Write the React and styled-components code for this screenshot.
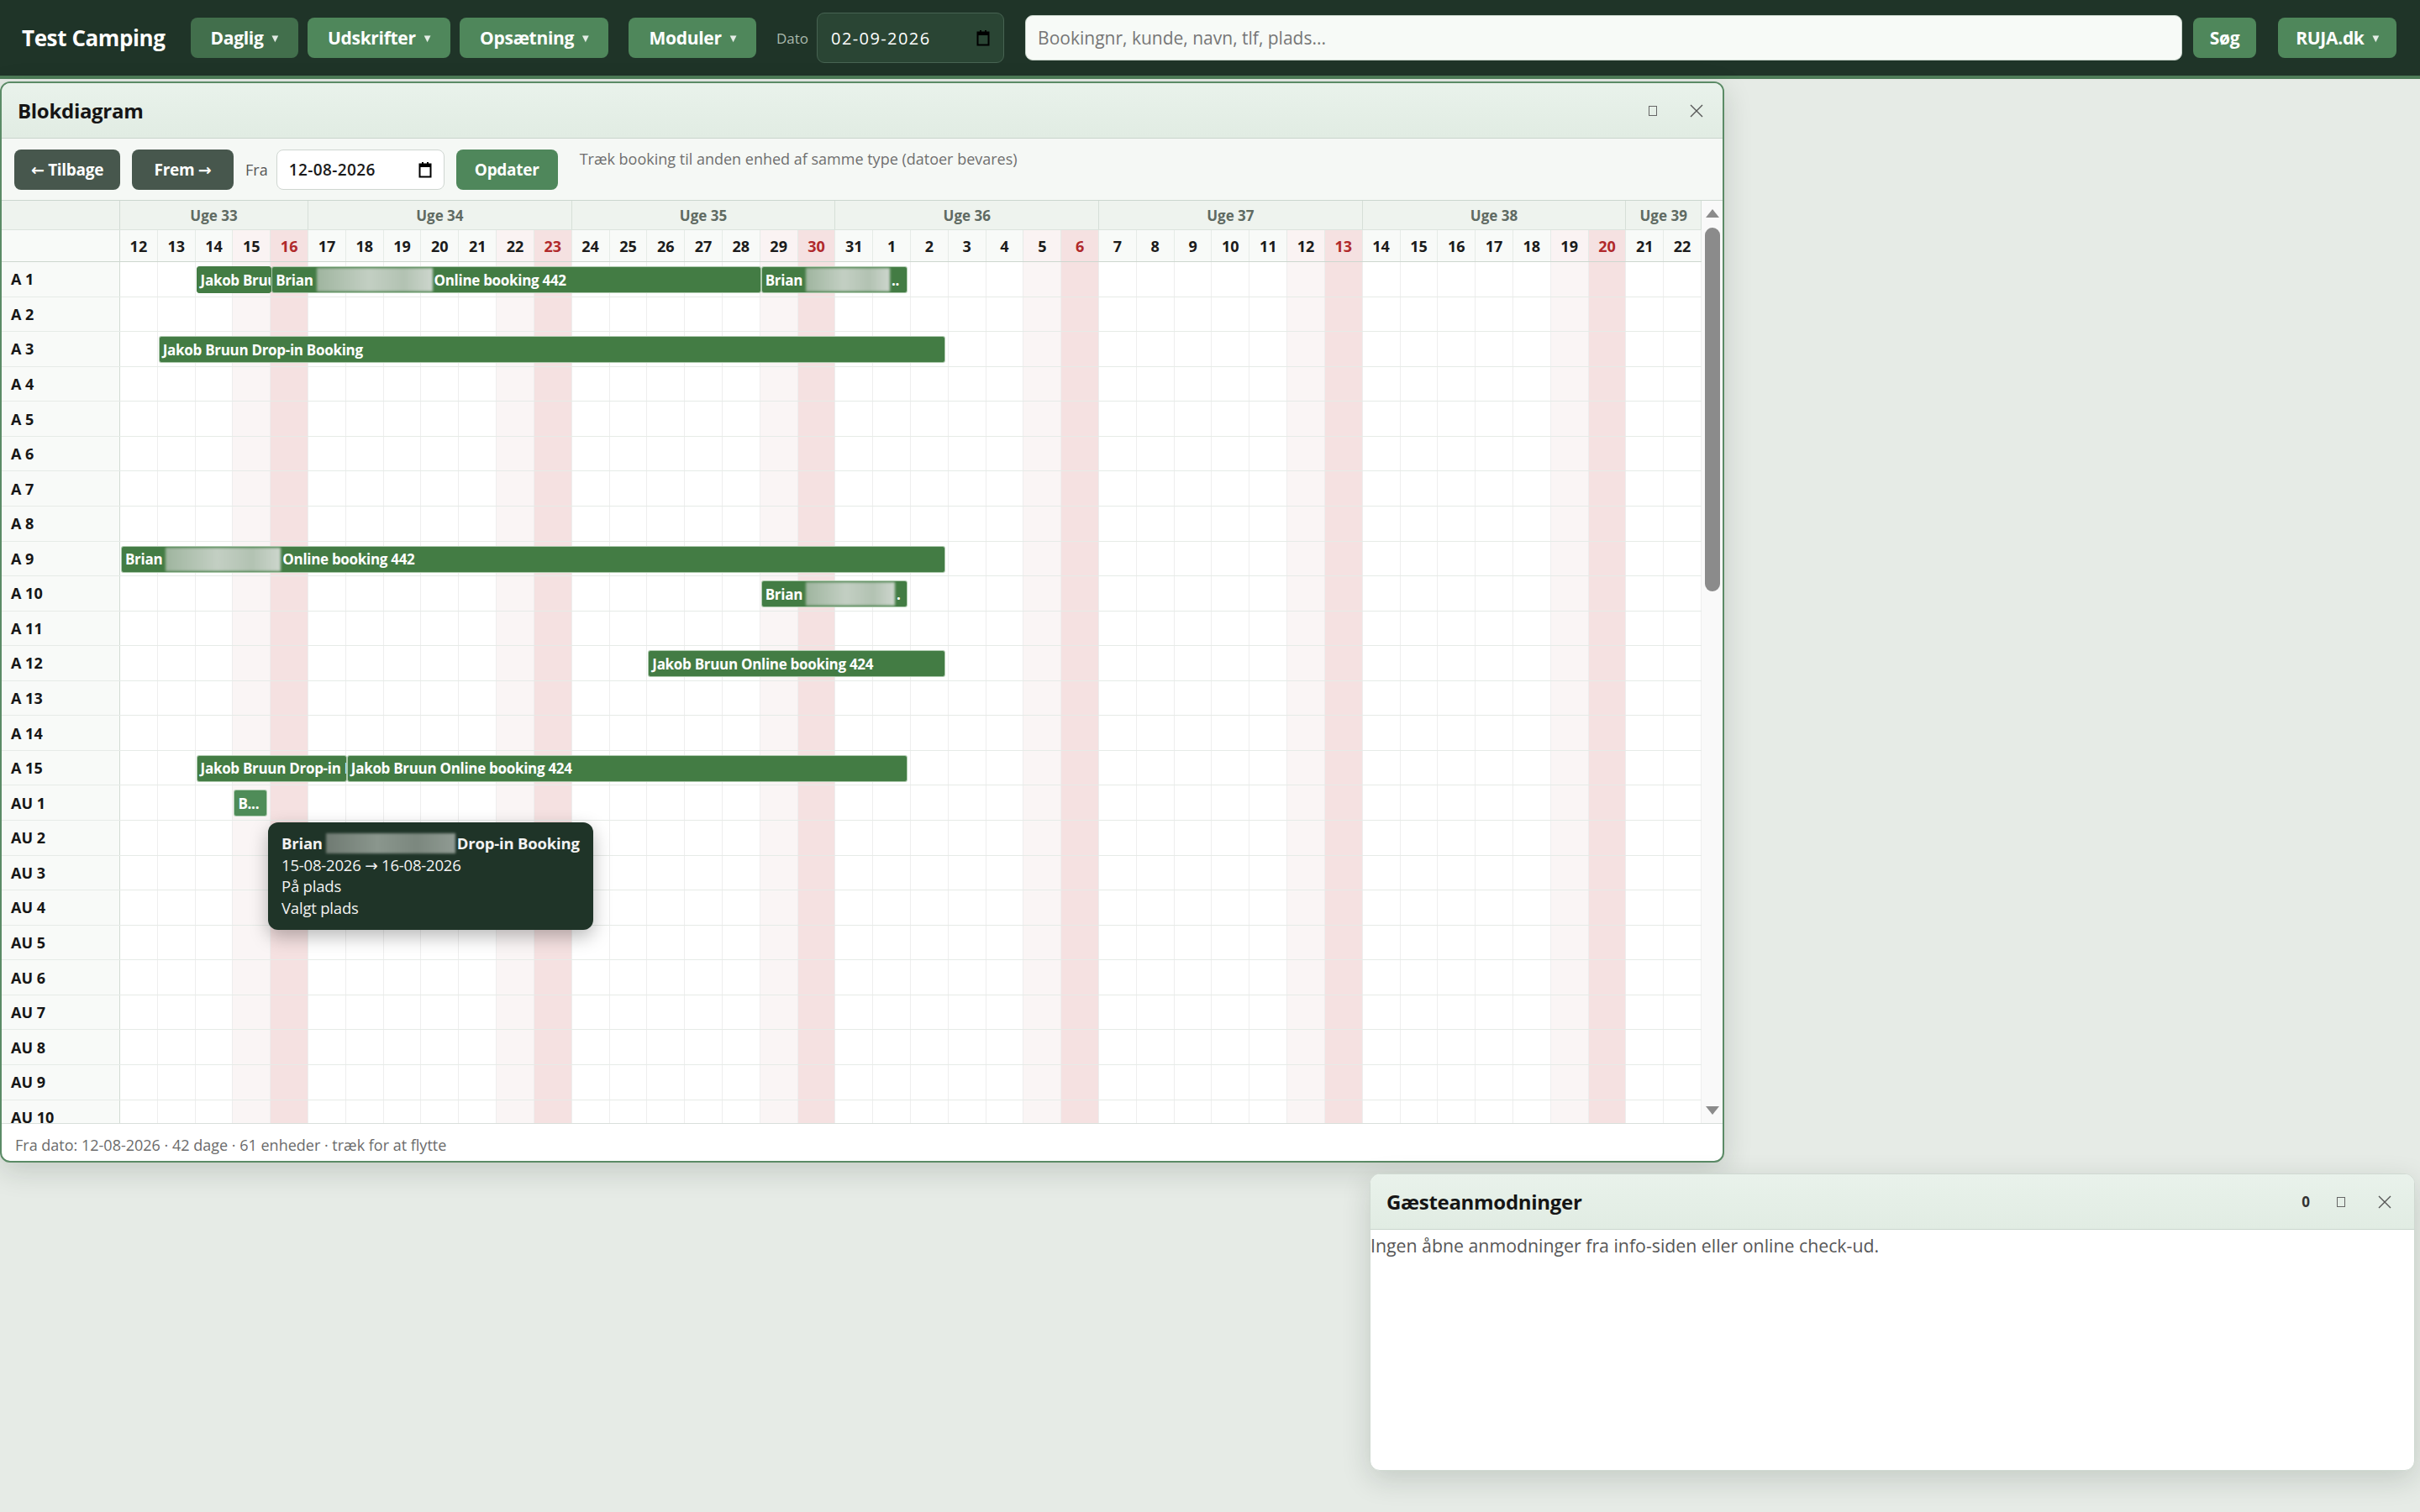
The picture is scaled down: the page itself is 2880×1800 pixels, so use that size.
import React from 'react';
import styled, { createGlobalStyle } from 'styled-components';

const GlobalStyle = createGlobalStyle`
  html, body {
    margin: 0;
    padding: 0;
  }
  body {
    background: #e6ebe6;
    font-family: "Open Sans", "Noto Sans", "DejaVu Sans", sans-serif;
    color: #1b1b1b;
    overflow: hidden;
  }
`;

const Page = styled.div`
  position: relative;
  width: 2880px;
  height: 1800px;
`;

/* ---------- top bar ---------- */

const TopBar = styled.header`
  height: 90px;
  background: #1f3428;
  border-bottom: 4px solid #4e7c58;
  display: flex;
  align-items: center;
  padding: 0 28px 0 26px;
  box-sizing: content-box;
`;

const Brand = styled.div`
  font-weight: 700;
  font-size: 26px;
  color: #fff;
  margin-right: 30px;
  letter-spacing: -0.4px;
`;

const NavGroup = styled.div`
  display: flex;
  align-items: center;
  gap: ${p => p.$gap || 10}px;
  margin-right: ${p => p.$after || 0}px;
`;

const NavButton = styled.button`
  height: 48px;
  border: none;
  border-radius: 8px;
  background: ${p => (p.$active ? '#426f4c' : '#4f875b')};
  color: #fff;
  font-family: inherit;
  font-weight: 700;
  font-size: 21px;
  padding: 0 ${p => p.$pad || 24}px;
  display: flex;
  align-items: center;
  gap: 10px;
  letter-spacing: -0.3px;
`;

const Caret = styled.span`
  font-size: 10px;
  opacity: 0.85;
`;

const DateLabel = styled.span`
  color: #a9b9ad;
  font-size: 17px;
`;

const NavDate = styled.div`
  width: 223px;
  height: 60px;
  box-sizing: border-box;
  border: 1px solid #476352;
  border-radius: 9px;
  background: #2a4534;
  color: #fff;
  font-size: 20px;
  letter-spacing: 1.4px;
  display: flex;
  align-items: center;
  justify-content: space-between;
  padding: 0 16px 0 16px;
`;

const Search = styled.div`
  flex: 1;
  height: 54px;
  box-sizing: border-box;
  border: 1px solid #c6d3c9;
  border-radius: 9px;
  background: #f7faf7;
  color: #767676;
  font-size: 21px;
  display: flex;
  align-items: center;
  padding: 0 14px;
  margin-right: 13px;
`;

/* ---------- windows ---------- */

const Window = styled.section`
  position: absolute;
  left: ${p => p.$x}px;
  top: ${p => p.$y}px;
  width: ${p => p.$w}px;
  height: ${p => p.$h}px;
  box-sizing: border-box;
  border: ${p => (p.$active ? '2px solid #5b8b66' : '1px solid #cfd9d1')};
  border-radius: 12px;
  background: #fff;
  box-shadow: 0 10px 34px rgba(20, 40, 25, 0.16);
  display: flex;
  flex-direction: column;
  overflow: hidden;
`;

const TitleBar = styled.div`
  height: 65px;
  flex-shrink: 0;
  background: linear-gradient(#e9f2eb, #e1ece3);
  border-bottom: 1px solid #c9d5cc;
  display: flex;
  align-items: center;
  padding: 0 ${p => p.$right || 22}px 0 19px;
`;

const Title = styled.h2`
  margin: 0;
  flex: 1;
  font-size: 24px;
  font-weight: 700;
  color: #151515;
  letter-spacing: -0.3px;
`;

const Controls = styled.div`
  display: flex;
  align-items: center;
  gap: 32px;
  color: #555;
`;

const Count = styled.span`
  font-weight: 700;
  font-size: 17px;
  color: #333;
`;

const MinBox = styled.span`
  width: 8px;
  height: 10px;
  border: 1px solid #666;
  margin-right: 6px;
`;

const Toolbar = styled.div`
  height: 74px;
  flex-shrink: 0;
  box-sizing: border-box;
  background: #f5f8f5;
  border-bottom: 1px solid #cbd6ce;
  display: flex;
  align-items: center;
  padding: 0 15px;
  gap: 14px;
`;

const ToolButton = styled.button`
  height: 48px;
  width: ${p => p.$w}px;
  border: none;
  border-radius: 8px;
  background: ${p => (p.$primary ? '#4f875b' : '#47574d')};
  color: #fff;
  font-family: inherit;
  font-weight: 700;
  font-size: 19px;
  letter-spacing: -0.3px;
`;

const FieldLabel = styled.span`
  font-size: 18px;
  color: #555;
  margin-right: -4px;
`;

const ToolDate = styled.div`
  width: 200px;
  height: 48px;
  box-sizing: border-box;
  border: 1px solid #cfd6d1;
  border-radius: 8px;
  background: #fff;
  font-size: 19px;
  font-weight: 600;
  letter-spacing: 0.4px;
  display: flex;
  align-items: center;
  justify-content: space-between;
  padding: 0 14px;
`;

const Hint = styled.span`
  align-self: flex-start;
  margin-top: 12px;
  margin-left: 12px;
  font-size: 18px;
  color: #6f6f6f;
`;

/* ---------- gantt grid ---------- */

const GridArea = styled.div`
  flex: 1;
  min-height: 0;
  display: flex;
  position: relative;
  border-bottom: 1px solid #d9dfdb;
`;

const GridScroll = styled.div`
  flex: 1;
  overflow: hidden;
`;

const HeaderRow = styled.div`
  display: grid;
  grid-template-columns: 141px repeat(42, minmax(0, 1fr));
  height: ${p => p.$h}px;
  background: ${p => p.$bg};
  border-bottom: 1px solid ${p => p.$line};
  box-sizing: border-box;
`;

const WeekCell = styled.div`
  grid-column: span ${p => p.$span};
  border-right: 1px solid #d6dfd8;
  display: flex;
  align-items: center;
  justify-content: center;
  font-weight: 700;
  font-size: 17px;
  color: #5f6a62;
`;

const DayCell = styled.div`
  border-right: 1px solid #e6ebe7;
  display: flex;
  align-items: center;
  justify-content: center;
  font-weight: 700;
  font-size: 18px;
  color: ${p => (p.$kind === 'sun' ? '#b0292b' : '#1b1b1b')};
  background: ${p =>
    p.$kind === 'sun' ? '#f5e1e1' : p.$kind === 'sat' ? '#faf3f3' : 'transparent'};
`;

const CornerCell = styled.div`
  border-right: 1px solid #d2dbd4;
`;

const Row = styled.div`
  display: grid;
  grid-template-columns: 141px repeat(42, minmax(0, 1fr));
  height: 41.57px;
  box-sizing: border-box;
  border-bottom: 1px solid #e6ebe7;
`;

const UnitLabel = styled.div`
  grid-row: 1;
  grid-column: 1;
  background: #f8faf8;
  border-right: 1px solid #d2dbd4;
  display: flex;
  align-items: center;
  padding-left: 11px;
  font-weight: 700;
  font-size: 18px;
  color: #161616;
`;

const Cell = styled.div`
  grid-row: 1;
  grid-column: ${p => p.$col};
  border-right: 1px solid #eeeeee;
  background: ${p =>
    p.$kind === 'sun' ? '#f5e1e1' : p.$kind === 'sat' ? '#faf5f5' : '#fff'};
`;

const Bar = styled.div`
  grid-row: 1;
  grid-column: ${p => p.$from + 2} / ${p => p.$to + 2};
  align-self: start;
  margin: 5px ${p => (p.$joined ? -1 : 4)}px 0 1px;
  height: 32px;
  box-sizing: border-box;
  background: ${p => (p.$hover ? '#4f8c58' : '#437c44')};
  border: 1px solid ${p => (p.$plain ? '#437c44' : 'rgba(210, 228, 210, 0.75)')};
  border-radius: 3px;
  color: #fff;
  font-weight: 700;
  font-size: 17px;
  letter-spacing: -0.3px;
  white-space: nowrap;
  overflow: hidden;
  display: flex;
  align-items: center;
  padding: 0 3px 0 4px;
  z-index: 1;
`;

const Redact = styled.span`
  display: inline-block;
  width: ${p => p.$w}px;
  height: ${p => p.$h || 28}px;
  margin: 0 2px 0 4px;
  flex-shrink: 0;
  background: ${p =>
    p.$dark
      ? 'linear-gradient(90deg, #6f7a72, #8a968d 40%, #7b877e 70%, #909b93)'
      : 'linear-gradient(90deg, #9fb59f, #c3cfc3 45%, #b2c2b2 75%, #cdd6cd)'};
  filter: blur(1.5px);
`;

const ScrollBar = styled.div`
  width: 25px;
  flex-shrink: 0;
  background: #f9f9f9;
  display: flex;
  flex-direction: column;
  align-items: center;
  padding: 10px 0 10px;
  box-sizing: border-box;
`;

const Thumb = styled.div`
  width: 18px;
  height: 433px;
  margin-top: 12px;
  border-radius: 9px;
  background: #8b8b8b;
  flex-shrink: 0;
`;

const Spacer = styled.div`
  flex: 1;
`;

const Tooltip = styled.div`
  position: absolute;
  left: 317px;
  top: 740px;
  width: 387px;
  box-sizing: border-box;
  padding: 12px 16px 13px;
  background: #1f3428;
  color: #f2f2f2;
  border-radius: 12px;
  box-shadow: 0 8px 22px rgba(0, 0, 0, 0.28);
  font-size: 18.5px;
  line-height: 25.7px;
  letter-spacing: -0.2px;
  z-index: 5;
`;

const TipTitle = styled.div`
  display: flex;
  align-items: center;
  height: 25.7px;
  font-weight: 700;
`;

const Footer = styled.div`
  height: 44px;
  flex-shrink: 0;
  box-sizing: border-box;
  display: flex;
  align-items: center;
  padding: 5px 0 0 16px;
  font-size: 18px;
  color: #6b6b6b;
`;

const RequestBody = styled.div`
  flex: 1;
  padding-top: 4px;
  font-size: 21.3px;
  color: #575757;
`;

/* ---------- data ---------- */

const START = new Date(2026, 7, 12);
const DAYS = Array.from({ length: 42 }, (_, i) => {
  const d = new Date(START);
  d.setDate(d.getDate() + i);
  const wd = d.getDay();
  return { n: d.getDate(), kind: wd === 0 ? 'sun' : wd === 6 ? 'sat' : '' };
});

const WEEKS = [
  ['Uge 33', 5],
  ['Uge 34', 7],
  ['Uge 35', 7],
  ['Uge 36', 7],
  ['Uge 37', 7],
  ['Uge 38', 7],
  ['Uge 39', 2],
];

const UNITS = [
  ...Array.from({ length: 15 }, (_, i) => `A ${i + 1}`),
  ...Array.from({ length: 12 }, (_, i) => `AU ${i + 1}`),
];

// from/to are day indexes (to = first day after the stay)
const BOOKINGS = {
  'A 1': [
    { from: 2, to: 4, plain: true, joined: true, text: 'Jakob Bruun Drop-in Booking' },
    { from: 4, to: 17, joined: true, name: 'Brian', blur: 138, text: 'Online booking 442' },
    { from: 17, to: 21, name: 'Brian', blur: 100, text: '..' },
  ],
  'A 3': [{ from: 1, to: 22, text: 'Jakob Bruun Drop-in Booking' }],
  'A 9': [{ from: 0, to: 22, name: 'Brian', blur: 137, text: 'Online booking 442' }],
  'A 10': [{ from: 17, to: 21, name: 'Brian', blur: 106, text: '.' }],
  'A 12': [{ from: 14, to: 22, text: 'Jakob Bruun Online booking 424' }],
  'A 15': [
    { from: 2, to: 6, joined: true, text: 'Jakob Bruun Drop-in Booking' },
    { from: 6, to: 21, text: 'Jakob Bruun Online booking 424' },
  ],
  'AU 1': [{ from: 3, to: 4, hover: true, text: 'B...' }],
};

const CloseIcon = ({ size = 18 }) => (
  <svg width={size} height={size} viewBox="0 0 18 18">
    <path d="M2 2 L16 16 M16 2 L2 16" stroke="#555" strokeWidth="1.4" fill="none" />
  </svg>
);

const CalendarIcon = () => (
  <svg width="16" height="20" viewBox="0 0 16 20">
    <rect x="1.5" y="3.5" width="13" height="15" fill="none" stroke="#000" strokeWidth="2" />
    <rect x="1.5" y="3.5" width="13" height="3.5" fill="#000" />
    <rect x="4" y="1" width="2" height="3" fill="#000" />
    <rect x="10" y="1" width="2" height="3" fill="#000" />
  </svg>
);

const Triangle = ({ up }) => (
  <svg width="16" height="10" viewBox="0 0 16 10">
    <path d={up ? 'M8 0 L16 10 L0 10 Z' : 'M0 0 L16 0 L8 10 Z'} fill="#8b8b8b" />
  </svg>
);

const BookingBar = ({ b }) => (
  <Bar $from={b.from} $to={b.to} $plain={b.plain} $hover={b.hover} $joined={b.joined}>
    {b.name ? (
      <>
        {b.name}
        <Redact $w={b.blur} />
        {b.text}
      </>
    ) : (
      b.text
    )}
  </Bar>
);

const Blokdiagram = () => (
  <Window $x={0} $y={97} $w={2052} $h={1287} $active>
    <TitleBar>
      <Title>Blokdiagram</Title>
      <Controls>
        <MinBox />
        <CloseIcon />
      </Controls>
    </TitleBar>
    <Toolbar>
      <ToolButton $w={126}>← Tilbage</ToolButton>
      <ToolButton $w={121}>Frem →</ToolButton>
      <FieldLabel>Fra</FieldLabel>
      <ToolDate>
        12-08-2026
        <CalendarIcon />
      </ToolDate>
      <ToolButton $w={121} $primary>
        Opdater
      </ToolButton>
      <Hint>Træk booking til anden enhed af samme type (datoer bevares)</Hint>
    </Toolbar>
    <GridArea>
      <GridScroll>
        <HeaderRow $h={35} $bg="#eef3ee" $line="#dbe3dd">
          <CornerCell />
          {WEEKS.map(([label, span]) => (
            <WeekCell key={label} $span={span}>
              {label}
            </WeekCell>
          ))}
        </HeaderRow>
        <HeaderRow $h={38} $bg="#f8faf8" $line="#cdd7cf">
          <CornerCell />
          {DAYS.map((d, i) => (
            <DayCell key={i} $kind={d.kind}>
              {d.n}
            </DayCell>
          ))}
        </HeaderRow>
        {UNITS.map(unit => (
          <Row key={unit}>
            <UnitLabel>{unit}</UnitLabel>
            {DAYS.map((d, i) => (
              <Cell key={i} $col={i + 2} $kind={d.kind} />
            ))}
            {(BOOKINGS[unit] || []).map((b, i) => (
              <BookingBar key={i} b={b} />
            ))}
          </Row>
        ))}
      </GridScroll>
      <ScrollBar>
        <Triangle up />
        <Thumb />
        <Spacer />
        <Triangle />
      </ScrollBar>
      <Tooltip>
        <TipTitle>
          Brian
          <Redact $w={154} $h={24} $dark />
          Drop-in Booking
        </TipTitle>
        <div>15-08-2026 → 16-08-2026</div>
        <div>På plads</div>
        <div>Valgt plads</div>
      </Tooltip>
    </GridArea>
    <Footer>Fra dato: 12-08-2026 · 42 dage · 61 enheder · træk for at flytte</Footer>
  </Window>
);

const Requests = () => (
  <Window $x={1630} $y={1397} $w={1244} $h={354}>
    <TitleBar $right={26}>
      <Title>Gæsteanmodninger</Title>
      <Controls>
        <Count>0</Count>
        <MinBox />
        <CloseIcon />
      </Controls>
    </TitleBar>
    <RequestBody>Ingen åbne anmodninger fra info-siden eller online check-ud.</RequestBody>
  </Window>
);

export default function App() {
  return (
    <Page>
      <GlobalStyle />
      <TopBar>
        <Brand>Test Camping</Brand>
        <NavGroup $gap={11} $after={24}>
          <NavButton $active>
            Daglig <Caret>▼</Caret>
          </NavButton>
          <NavButton>
            Udskrifter <Caret>▼</Caret>
          </NavButton>
          <NavButton>
            Opsætning <Caret>▼</Caret>
          </NavButton>
        </NavGroup>
        <NavGroup $after={24}>
          <NavButton>
            Moduler <Caret>▼</Caret>
          </NavButton>
        </NavGroup>
        <NavGroup $gap={10} $after={25}>
          <DateLabel>Dato</DateLabel>
          <NavDate>
            02-09-2026
            <CalendarIcon />
          </NavDate>
        </NavGroup>
        <Search>Bookingnr, kunde, navn, tlf, plads...</Search>
        <NavGroup $gap={26}>
          <NavButton $pad={20}>Søg</NavButton>
          <NavButton $pad={21}>
            RUJA.dk <Caret>▼</Caret>
          </NavButton>
        </NavGroup>
      </TopBar>
      <Blokdiagram />
      <Requests />
    </Page>
  );
}
